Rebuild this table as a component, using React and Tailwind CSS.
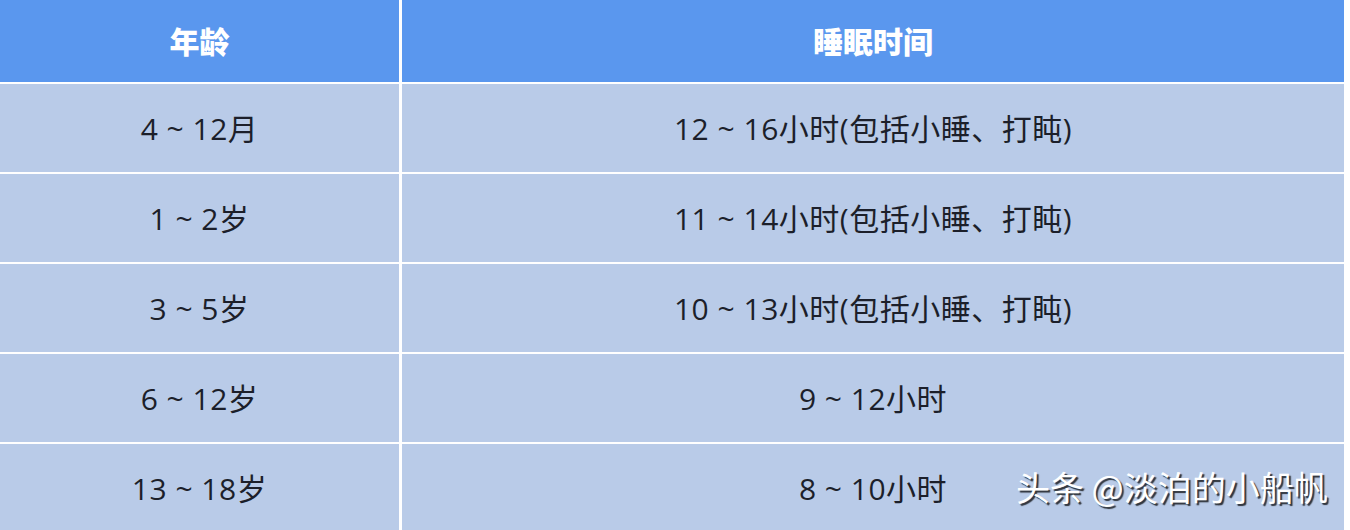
import React from "react";

const rows = [
  ["4 ~ 12月", "12 ~ 16小时(包括小睡、打盹)"],
  ["1 ~ 2岁", "11 ~ 14小时(包括小睡、打盹)"],
  ["3 ~ 5岁", "10 ~ 13小时(包括小睡、打盹)"],
  ["6 ~ 12岁", "9 ~ 12小时"],
  ["13 ~ 18岁", "8 ~ 10小时"],
];

const font = { fontFamily: '"Open Sans", "Noto Sans CJK SC", sans-serif' };

export default function App() {
  return (
    <div className="relative w-[1350px] h-[530px] overflow-hidden bg-white" style={font}>
      <div className="flex flex-col gap-[2px] w-[1344px]">
        <div className="grid grid-cols-[399px_942px] gap-[3px] h-[82px]">
          <div className="bg-[#5a97ee] flex items-center justify-center text-white text-[30px] font-black pb-[2px]" style={{ fontFamily: '"Noto Sans CJK SC", sans-serif' }}>
            年龄
          </div>
          <div className="bg-[#5a97ee] flex items-center justify-center text-white text-[30px] font-black pb-[2px]" style={{ fontFamily: '"Noto Sans CJK SC", sans-serif' }}>
            睡眠时间
          </div>
        </div>
        {rows.map(([a, b], i) => (
          <div key={i} className="grid grid-cols-[399px_942px] gap-[3px] h-[88px]">
            <div className="bg-[#b9cbe8] flex items-center justify-center text-[#1c1f2a] text-[30px] tracking-[0.5px]">
              {a}
            </div>
            <div className="bg-[#b9cbe8] flex items-center justify-center text-[#1c1f2a] text-[30px] tracking-[0.5px]">
              {b}
            </div>
          </div>
        ))}
      </div>
      <div
        className="absolute left-[1016px] top-[470px] text-white text-[34px] leading-none whitespace-nowrap"
        style={{ fontFamily: '"Noto Sans CJK SC", sans-serif', textShadow: "2px 2px 1px rgba(0,0,0,0.75)" }}
      >
        头条 @淡泊的小船帆
      </div>
    </div>
  );
}
